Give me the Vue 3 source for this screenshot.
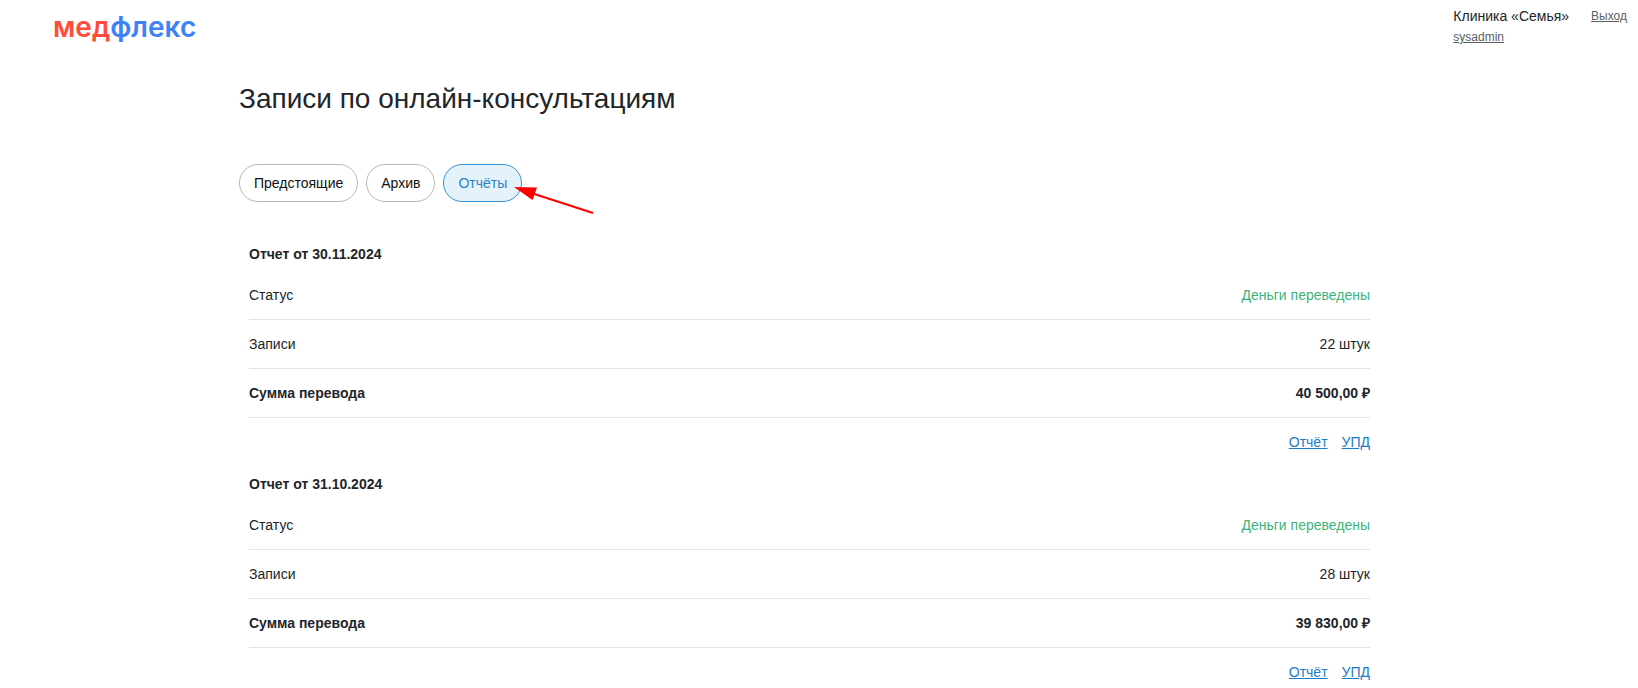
<script setup>
import { ref } from 'vue'

const tabs = ['Предстоящие', 'Архив', 'Отчёты']
const active = ref('Отчёты')

const reports = [
  { date: '30.11.2024', status: 'Деньги переведены', count: '22 штук', sum: '40 500,00 ₽' },
  { date: '31.10.2024', status: 'Деньги переведены', count: '28 штук', sum: '39 830,00 ₽' },
]
</script>

<template>
  <div class="page">
    <header class="header">
      <a class="logo" href="#"><span class="logo-med">мед</span><span class="logo-flex">флекс</span></a>
      <div class="account">
        <div class="clinic">
          <div class="clinic-name">Клиника «Семья»</div>
          <a class="small-link" href="#">sysadmin</a>
        </div>
        <a class="small-link" href="#">Выход</a>
      </div>
    </header>

    <main class="main">
      <h1 class="title">Записи по онлайн-консультациям</h1>

      <nav class="tabs">
        <button
          v-for="tab in tabs"
          :key="tab"
          type="button"
          class="tab"
          :class="{ active: tab === active }"
          @click="active = tab"
        >{{ tab }}</button>
        <span class="pointer">
          <svg class="arrow" width="80" height="30" viewBox="0 0 80 30" aria-hidden="true">
            <path d="M18 7.2 79 27" stroke="#ff0000" stroke-width="2" fill="none" />
            <path d="M0 1 23 1.5 18.500 14Z" fill="#ff0000" />
          </svg>
        </span>
      </nav>

      <section v-for="report in reports" :key="report.date" class="report">
        <h2 class="report-title">Отчет от {{ report.date }}</h2>
        <table class="table">
          <tbody>
            <tr>
              <th scope="row">Статус</th>
              <td class="paid">{{ report.status }}</td>
            </tr>
            <tr>
              <th scope="row">Записи</th>
              <td>{{ report.count }}</td>
            </tr>
            <tr class="total">
              <th scope="row">Сумма перевода</th>
              <td>{{ report.sum }}</td>
            </tr>
          </tbody>
        </table>
        <div class="links">
          <a href="#">Отчёт</a>
          <a href="#">УПД</a>
        </div>
      </section>
    </main>
  </div>
</template>

<style>
body {
  margin: 0;
  background: #fff;
}
</style>

<style scoped>
.page {
  font-family: "Liberation Sans", Arial, sans-serif;
  font-size: 14px;
  line-height: 20px;
  color: #212529;
}

.header {
  display: flex;
  justify-content: space-between;
  align-items: flex-start;
  height: 56px;
  padding: 0 11px 0 53px;
}

.logo {
  padding-top: 10px;
  font-family: Inter, sans-serif;
  font-size: 28px;
  font-weight: 600;
  line-height: 34px;
  text-decoration: none;
}

.logo-med {
  color: #ff4b3a;
}

.logo-flex {
  color: #3d82f6;
}

.account {
  display: flex;
  gap: 22px;
  padding-top: 6px;
}

.small-link {
  font-size: 12px;
  color: #5a5f64;
}

.main {
  max-width: 1160px;
  margin: 0 auto;
}

.title {
  margin: 0;
  padding-top: 26px;
  font-size: 28px;
  font-weight: 400;
  line-height: 34px;
}

.tabs {
  display: flex;
  gap: 8px;
  margin-top: 48px;
  margin-bottom: 42px;
}

.tab {
  height: 38px;
  padding: 0 14px;
  border: 1px solid #b8b8b8;
  border-radius: 19px;
  background: #fff;
  color: #111;
  font: inherit;
  cursor: pointer;
}

.tab.active {
  border-color: #3592d4;
  background: #e6f2fa;
  color: #2784c8;
}

.pointer {
  position: relative;
}

.arrow {
  position: absolute;
  top: 22px;
  left: -16px;
}

.report {
  padding: 0 29px 0 10px;
  margin-bottom: 10px;
}

.report-title {
  margin: 0;
  font-size: 14px;
  font-weight: 700;
  line-height: 20px;
}

.table {
  width: 100%;
  margin-top: 7px;
  border-collapse: separate;
  border-spacing: 0;
}

.table th,
.table td {
  height: 48px;
  padding: 0;
  border-bottom: 1px solid #e2e4e8;
  font-weight: 400;
  text-align: left;
}

.table td {
  text-align: right;
}

.table .paid {
  color: #3cb37a;
}

.table .total th,
.table .total td {
  font-weight: 700;
}

.links {
  display: flex;
  justify-content: flex-end;
  gap: 14px;
  padding: 14px 0 12px;
}

.links a {
  color: #1a7cc7;
}
</style>
